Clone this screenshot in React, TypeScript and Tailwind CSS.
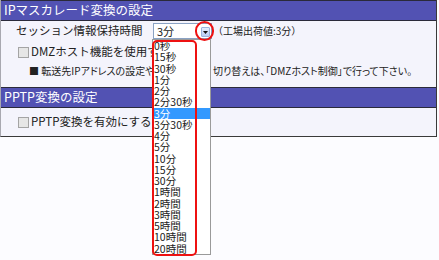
import React from "react";

const OPTIONS = [
  "0秒",
  "15秒",
  "30秒",
  "1分",
  "2分",
  "2分30秒",
  "3分",
  "3分30秒",
  "4分",
  "5分",
  "10分",
  "15分",
  "30分",
  "1時間",
  "2時間",
  "3時間",
  "5時間",
  "10時間",
  "20時間",
];

const SELECTED = "3分";

function SectionHeader({ title }: { title: string }) {
  return (
    <div className="flex h-[21px] items-center border-y border-[#2a2a3a] bg-[#5252b3] pl-[3px] text-[12.5px] leading-none text-white">
      {title}
    </div>
  );
}

function Checkbox() {
  return <span className="block h-[11px] w-[11px] shrink-0 border border-[#a4a4a4] bg-[#e6e6e6]" />;
}

function SessionSelect() {
  return (
    <div className="relative flex h-[16px] w-[59px] items-center border border-[#8aa2c4] bg-white pl-[3px] text-[11px] text-[#222]">
      {SELECTED}
      <span className="absolute right-[1px] top-[3px] flex h-[10px] w-[9px] items-center justify-center rounded-[1px] border border-[#9bb4de] bg-gradient-to-b from-[#e4edfd] to-[#b9cdf4]">
        <svg width="5" height="3" viewBox="0 0 5 3">
          <path d="M0 0h5L2.5 3z" fill="#111" />
        </svg>
      </span>
    </div>
  );
}

export default function App() {
  return (
    <div
      className="relative h-[260px] w-[439px] overflow-hidden bg-[#fcfcff]"
      style={{ fontFamily: '"Noto Sans CJK JP", "Noto Sans", sans-serif' }}
    >
      <div className="w-[437px] border-r border-l border-b border-r-[#3a3a3a] border-l-[#a8a8b0] border-b-[#3a3a3a] bg-[#f4f4fc]">
        <SectionHeader title="IPマスカレード変換の設定" />
        <div className="flex h-[66px] flex-col pt-[2px] text-[#222]">
          <div className="flex h-[16px] items-center">
            <span className="w-[152px] pl-[15px] text-[11.5px] leading-none">セッション情報保持時間</span>
            <SessionSelect />
            <span className="pl-[1px] text-[10px] leading-none">（工場出荷値:3分）</span>
          </div>
          {/* the open list covers the labels from x=152, so they are clipped there */}
          <div className="mt-[6px] flex h-[14px] items-center gap-[2px] pl-[17px]">
            <Checkbox />
            <span className="w-[122px] overflow-hidden whitespace-nowrap text-[11.5px] leading-none">DMZホスト機能を使用する</span>
          </div>
          <div className="mt-[5px] flex h-[14px] items-center pl-[28px] text-[10px] leading-none whitespace-nowrap [font-feature-settings:'palt']">
            <span className="w-[124px] overflow-hidden">■ 転送先IPアドレスの設定や</span>
            <span className="w-[60px]" />
            <span>切り替えは、「DMZホスト制御」で行って下さい。</span>
          </div>
        </div>
        <SectionHeader title="PPTP変換の設定" />
        <div className="flex h-[28px] flex-col pt-[7px] text-[#222]">
          <div className="flex h-[14px] items-center gap-[2px] pl-[17px]">
            <Checkbox />
            <span className="w-[122px] overflow-hidden whitespace-nowrap text-[11.5px] leading-none">PPTP変換を有効にする</span>
          </div>
        </div>
      </div>

      {/* open dropdown list */}
      <ul className="absolute left-[152px] top-[39px] w-[59px] border border-[#9a9a9a] bg-white text-[10.5px] text-[#222]">
        {OPTIONS.map((o) => (
          <li
            key={o}
            className={`flex h-[11.25px] items-center overflow-hidden pl-[1px] leading-[11px] ${o === SELECTED ? "bg-[#3399ff] text-white" : ""}`}
          >
            {o}
          </li>
        ))}
      </ul>

      {/* red annotations */}
      <div className="absolute left-[152px] top-[40px] h-[216px] w-[45px] rounded-[5px] border-2 border-[#ee1111]" />
      <div className="absolute left-[195px] top-[21px] h-[20px] w-[19px] rounded-full border-2 border-[#ee1111]" />
    </div>
  );
}
